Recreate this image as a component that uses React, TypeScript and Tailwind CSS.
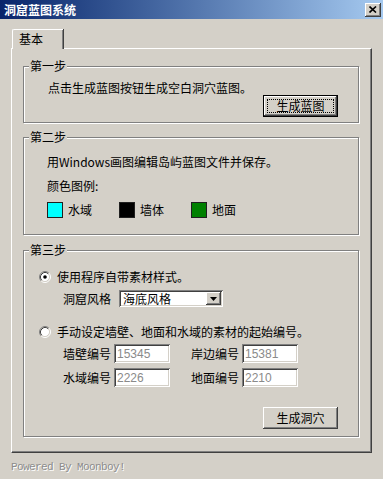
import type { ReactNode } from 'react';

const font = { fontFamily: '"Noto Sans CJK SC", "Liberation Sans", sans-serif' };

const raised =
    'shadow-[inset_-1px_-1px_0_#404040,inset_1px_1px_0_#ffffff,inset_-2px_-2px_0_#808080,inset_2px_2px_0_#d4d0c8]';
const sunken =
    'shadow-[inset_1px_1px_0_#808080,inset_-1px_-1px_0_#ffffff,inset_2px_2px_0_#404040,inset_-2px_-2px_0_#d4d0c8]';

function GroupBox({ title, height, children }: { title: string; height: string; children: ReactNode }) {
    return (
        <div
            className={`relative ml-[11px] w-[336px] ${height} border border-[#808080] shadow-[inset_1px_1px_0_#ffffff,1px_1px_0_#ffffff]`}
        >
            {/* legend sits over the top line */}
            <span className="absolute -top-[8px] left-[5px] bg-[#d4d0c8] px-[1px] text-[12px] leading-[14px] text-black">
                {title}
            </span>
            {children}
        </div>
    );
}

function Button({ label, isDefault = false }: { label: string; isDefault?: boolean }) {
    return (
        <button
            className={`relative flex h-[22px] w-[75px] items-center justify-center bg-[#d4d0c8] text-[12px] leading-[14px] text-black ${
                isDefault ? 'border border-black' : ''
            } ${raised}`}
        >
            {isDefault && <span className="absolute inset-[3px] border border-dotted border-black" />}
            <span className="relative">{label}</span>
        </button>
    );
}

function Radio({ checked, label }: { checked: boolean; label: string }) {
    return (
        <div className="flex h-[16px] items-center pl-[15px]">
            <svg width="12" height="12" viewBox="0 0 12 12">
                <circle cx="6" cy="6" r="4.5" fill="#ffffff" />
                <path d="M2.11 9.89 A5.5 5.5 0 0 1 9.89 2.11" stroke="#808080" fill="none" />
                <path d="M9.89 2.11 A5.5 5.5 0 0 1 2.11 9.89" stroke="#ffffff" fill="none" />
                <path d="M2.82 9.18 A4.5 4.5 0 0 1 9.18 2.82" stroke="#404040" fill="none" />
                <path d="M9.18 2.82 A4.5 4.5 0 0 1 2.82 9.18" stroke="#d4d0c8" fill="none" />
                {checked && <circle cx="6" cy="6" r="1.8" fill="#000000" />}
            </svg>
            <span className="ml-[6px] text-[12px] leading-[14px] text-black">{label}</span>
        </div>
    );
}

function NumberField({ label, value }: { label: string; value: string }) {
    return (
        <div className="flex items-center">
            <span className="w-[48px] text-[12px] leading-[14px] text-black">{label}</span>
            <div
                className={`ml-[3px] flex h-[19px] w-[56px] items-center bg-white pl-[3px] text-[12px] text-[#8a8a8a] ${sunken}`}
                style={{ fontFamily: '"Liberation Sans", Arial, sans-serif' }}
            >
                {value}
            </div>
        </div>
    );
}

function Swatch({ color, label }: { color: string; label: string }) {
    return (
        <div className="flex w-[72px] items-center">
            <span className={`h-[16px] w-[16px] border border-[#202020] ${color}`} />
            <span className="ml-[5px] text-[12px] leading-[14px] text-black">{label}</span>
        </div>
    );
}

export default function App() {
    return (
        <div className="h-[479px] w-[383px] overflow-hidden bg-[#d4d0c8]" style={font}>
            {/* Title bar */}
            <div className="flex h-[19px] items-center justify-between bg-gradient-to-r from-[#0a246a] to-[#a6caf0] pl-[4px] pr-[2px]">
                <span className="text-[12px] font-bold leading-[14px] text-white">洞窟蓝图系统</span>
                <div className={`flex h-[14px] w-[16px] items-center justify-center bg-[#d4d0c8] ${raised}`}>
                    <svg width="8" height="7" viewBox="0 0 8 7">
                        <path d="M0.5 0.5 L7 6.5 M7 0.5 L0.5 6.5" stroke="#000000" strokeWidth="1.6" />
                    </svg>
                </div>
            </div>

            {/* Tab strip */}
            <div className="ml-[12px] mt-[10px] flex">
                <div className="relative z-10 -mb-px flex h-[20px] w-[51px] items-start rounded-tl-[2px] border-l border-t border-white bg-[#d4d0c8] shadow-[inset_-1px_0_0_#808080,1px_0_0_#404040]">
                    <span className="ml-[6px] mt-[2px] text-[12px] leading-[14px] text-black">基本</span>
                </div>
            </div>

            {/* Tab panel */}
            <div className="ml-[11px] h-[405px] w-[361px] border-l border-t border-white border-r border-b border-r-[#404040] border-b-[#404040] shadow-[inset_-1px_-1px_0_#808080]">
                <div className="mt-[17px]">
                    <GroupBox title="第一步" height="h-[57px]">
                        <div className="flex flex-col pl-[24px] pr-[20px]">
                            <span className="mt-[14px] text-[12px] leading-[14px] text-black">
                                点击生成蓝图按钮生成空白洞穴蓝图。
                            </span>
                            <div className="flex justify-end">
                                <Button label="生成蓝图" isDefault />
                            </div>
                        </div>
                    </GroupBox>
                </div>

                <div className="mt-[14px]">
                    <GroupBox title="第二步" height="h-[98px]">
                        <div className="flex flex-col pl-[23px]">
                            <span className="mt-[17px] text-[12px] leading-[14px] text-black">
                                用Windows画图编辑岛屿蓝图文件并保存。
                            </span>
                            <span className="mt-[10px] text-[12px] leading-[14px] text-black">颜色图例:</span>
                            <div className="mt-[9px] flex">
                                <Swatch color="bg-[#00ffff]" label="水域" />
                                <Swatch color="bg-black" label="墙体" />
                                <Swatch color="bg-[#008000]" label="地面" />
                            </div>
                        </div>
                    </GroupBox>
                </div>

                <div className="mt-[15px]">
                    <GroupBox title="第三步" height="h-[187px]">
                        <div className="flex flex-col">
                            <div className="mt-[18px]">
                                <Radio checked label="使用程序自带素材样式。" />
                            </div>
                            <div className="mt-[5px] flex items-center pl-[39px]">
                                <span className="text-[12px] leading-[14px] text-black">洞窟风格</span>
                                <div className={`ml-[8px] flex h-[17px] w-[104px] items-center justify-between bg-white pl-[4px] pr-[2px] ${sunken}`}>
                                    <span className="text-[12px] leading-[14px] text-black">海底风格</span>
                                    <div className={`flex h-[13px] w-[15px] items-center justify-center bg-[#d4d0c8] ${raised}`}>
                                        <svg width="7" height="4" viewBox="0 0 7 4">
                                            <path d="M0 0 H7 L3.5 4 Z" fill="#000000" />
                                        </svg>
                                    </div>
                                </div>
                            </div>
                            <div className="mt-[17px]">
                                <Radio checked={false} label="手动设定墙壁、地面和水域的素材的起始编号。" />
                            </div>
                            <div className="mt-[4px] flex gap-[21px] pl-[39px]">
                                <NumberField label="墙壁编号" value="15345" />
                                <NumberField label="岸边编号" value="15381" />
                            </div>
                            <div className="mt-[5px] flex gap-[21px] pl-[39px]">
                                <NumberField label="水域编号" value="2226" />
                                <NumberField label="地面编号" value="2210" />
                            </div>
                            <div className="mt-[20px] flex justify-end pr-[20px]">
                                <Button label="生成洞穴" />
                            </div>
                        </div>
                    </GroupBox>
                </div>
            </div>

            {/* Footer */}
            <div
                className="ml-[11px] mt-[7px] text-[11px] leading-[14px] tracking-[-0.6px] text-[#8c8c8c] [text-shadow:1px_1px_0_#ffffff]"
                style={{ fontFamily: '"Liberation Mono", monospace' }}
            >
                Powered By Moonboy!
            </div>
        </div>
    );
}
